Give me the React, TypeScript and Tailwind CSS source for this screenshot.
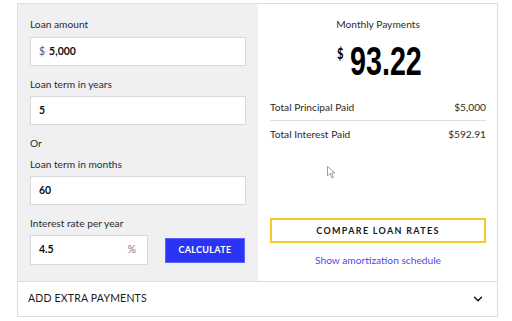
import React from "react";
import { ChevronDown } from "lucide-react";

const font = { fontFamily: "Lato, 'Open Sans', sans-serif" };

const Label = ({ children, className = "" }: { children: React.ReactNode; className?: string }) => (
  <div className={`text-[10.2px] leading-[14px] text-[#2b2b2b] ${className}`}>{children}</div>
);

const Field = ({ prefix, value, suffix, className = "" }: { prefix?: string; value: string; suffix?: string; className?: string }) => (
  <div className={`h-[29px] bg-white border border-[#d9d9dc] flex items-center px-[8px] text-[10.5px] ${className}`}>
    {prefix && <span className="text-[#555] mr-[4px]">{prefix}</span>}
    <span className="font-bold text-[#111] flex-1">{value}</span>
    {suffix && <span className="text-[#777] mr-[3px]">{suffix}</span>}
  </div>
);

export default function App() {
  return (
    <div className="w-[512px] h-[321px] bg-white pl-[17px] pt-[3px]" style={font}>
      <div className="w-[481px] border border-[#dedee0] relative">
        <div className="flex h-[277px]">
          <div className="w-[240px] bg-[#f0f0f2] pl-[12px] pr-[12px] pt-[13px] flex flex-col">
            <Label>Loan amount</Label>
            <Field prefix="$" value="5,000" className="mt-[6px]" />
            <Label className="mt-[11px]">Loan term in years</Label>
            <Field value="5" className="mt-[5px]" />
            <Label className="mt-[11px]">Or</Label>
            <Label className="mt-[7px]">Loan term in months</Label>
            <Field value="60" className="mt-[5px]" />
            <Label className="mt-[11px]">Interest rate per year</Label>
            <div className="flex items-center mt-[5px]">
              <Field value="4.5" suffix="%" className="w-[118px] h-[30px]" />
              <button className="ml-[17px] w-[80px] h-[25px] bg-[#2b34f5] border border-[#5b63ff] text-white text-[9px] font-bold tracking-[0.3px]">
                CALCULATE
              </button>
            </div>
          </div>
          <div className="flex-1 pl-[12px] pr-[11px] pt-[13px] flex flex-col">
            <div className="text-center text-[10.2px] leading-[14px] text-[#2b2b2b]">Monthly Payments</div>
            <div className="flex justify-center items-start mt-[15px] h-[40px]">
              <span className="text-[15px] font-bold text-black leading-none mr-[5px] inline-block scale-x-[0.75]">$</span>
              <span className="text-[41px] font-bold text-black leading-none inline-block scale-x-[0.7] origin-left w-[70px] -mt-[5px]" style={{ fontFamily: "'Liberation Sans Narrow', 'Liberation Sans', sans-serif" }}>
                93.22
              </span>
            </div>
            <div className="mt-[14px] flex justify-between text-[10.2px] leading-[14px] text-[#2b2b2b] pb-[6px] border-b border-[#dedee0]">
              <span>Total Principal Paid</span>
              <span>$5,000</span>
            </div>
            <div className="mt-[6px] flex justify-between text-[10.2px] leading-[14px] text-[#2b2b2b]">
              <span>Total Interest Paid</span>
              <span>$592.91</span>
            </div>
            <button className="mt-[77px] h-[25px] border-[2px] border-[#fbc82a] text-[9px] font-bold tracking-[1.3px] text-[#1a1a1a]">
              COMPARE LOAN RATES
            </button>
            <div className="mt-[10px] text-center text-[10.2px] leading-[14px] text-[#4b4bf0]">Show amortization schedule</div>
          </div>
        </div>
        <div className="h-[35px] border-t border-[#dedee0] flex items-center justify-between pl-[10px] pr-[12px]">
          <span className="text-[10.5px] text-[#1a1a1a] tracking-[0.2px]">ADD EXTRA PAYMENTS</span>
          <ChevronDown size={14} strokeWidth={2.5} className="text-[#111]" />
        </div>
        <svg className="absolute left-[309px] top-[162px]" width="9" height="13" viewBox="0 0 9 13">
          <path d="M0.5 0.5 L0.5 10 L3 7.5 L5 12 L6.5 11.3 L4.6 7 L8 7 Z" fill="white" stroke="#888" strokeWidth="0.8" />
        </svg>
      </div>
    </div>
  );
}
